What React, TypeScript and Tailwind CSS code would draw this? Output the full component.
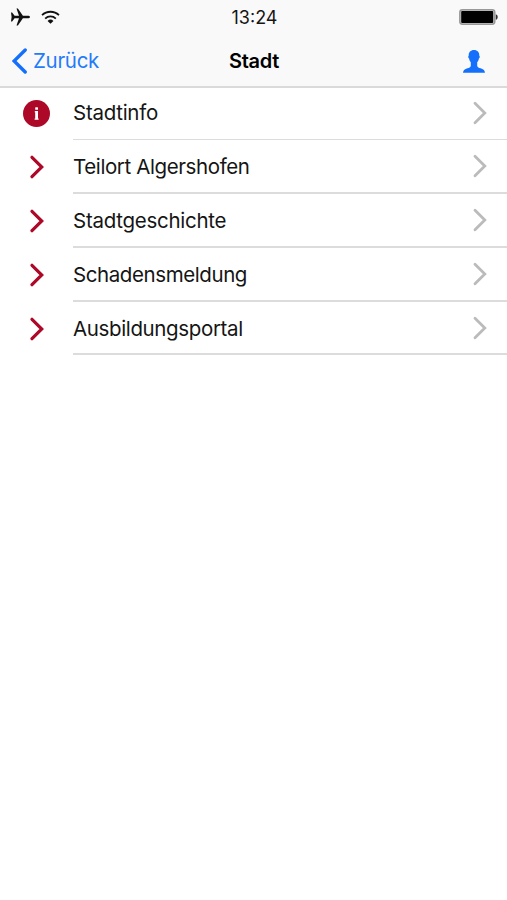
type Item = { label: string; info?: boolean; height: string; spacing: string };

const items: Item[] = [
  { label: "Stadtinfo", info: true, height: "h-[52px]", spacing: "tracking-[-0.27px]" },
  { label: "Teilort Algershofen", height: "h-[54px]", spacing: "tracking-[-0.39px]" },
  { label: "Stadtgeschichte", height: "h-[54px]", spacing: "tracking-[-0.27px]" },
  { label: "Schadensmeldung", height: "h-[54px]", spacing: "tracking-[-0.41px]" },
  { label: "Ausbildungsportal", height: "h-[53px]", spacing: "tracking-[-0.36px]" },
];

function Plane() {
  return (
    <svg width="19" height="18" viewBox="0 0 19 18" fill="#111">
      <path d="M0 4.500h1.100l2.500 3.300 4.400-.1L5.500.5h1.400l5 7.200h4.800c1.300 0 2.300.5 2.300 1.300s-1 1.300-2.300 1.300h-4.800l-5 7.200H5.500L8 10.300l-4.400-.1-2.500 3.300H0L.6 9z" />
    </svg>
  );
}

function Wifi() {
  return (
    <svg width="19" height="15" viewBox="0 0 20 15" fill="none" stroke="#111" strokeWidth="1.900">
      <path d="M1.100 5.100a12.700 12.700 0 0 1 17.800 0M4.400 8.700a8 8 0 0 1 11.200 0" />
      <path d="M10 14 6.900 11.100a4.500 4.500 0 0 1 6.200 0z" fill="#111" stroke="none" />
    </svg>
  );
}

function Battery() {
  return (
    <svg width="39" height="16" viewBox="0 0 39 16">
      <rect x=".8" y=".8" width="35" height="14.400" rx="2.600" fill="#ccc" stroke="#999" strokeWidth="1.500" />
      <rect x="2.200" y="2.100" width="32" height="11.800" rx="1" fill="#000" />
      <path d="M36.800 5.200c1.300.4 1.900 1.400 1.900 2.800s-.6 2.400-1.900 2.800z" fill="#333" />
    </svg>
  );
}

function Person() {
  return (
    <svg width="22" height="23" viewBox="0 0 22 23" fill="#146ffb">
      <path d="M11 0c3.400 0 5.500 2.300 5.300 5.700.7.3.6 2.300-.4 2.900-.3 1.700-.9 2.800-1.700 3.600v3.700c.3 1.300 1.700 1.800 3.400 2.300 2.600.8 4.100 1.700 4.400 4.500H0c.3-2.800 1.800-3.700 4.400-4.500 1.700-.5 3.100-1 3.400-2.300v-3.700C7 11.400 6.400 10.300 6.100 8.600c-1-.6-1.100-2.600-.4-2.900C5.500 2.300 7.600 0 11 0z" />
    </svg>
  );
}

function Chevron({ className }: { className: string }) {
  return (
    <svg className={className} width="14" height="24" viewBox="0 0 14 24" fill="none" stroke="currentColor" strokeLinecap="round">
      <path d="m2 2.300 9.800 9.700L2 21.700" />
    </svg>
  );
}

function Row({ item }: { item: Item }) {
  return (
    <li className={`flex ${item.height}`}>
      <div className="flex w-[73px] shrink-0 items-center justify-center">
        {item.info ? (
          <svg className="mb-px" width="27" height="27" viewBox="0 0 27 27">
            <circle cx="13.500" cy="13.500" r="13.500" fill="#ad0827" />
            <rect x="12.200" y="7.200" width="2.800" height="2.600" rx=".6" fill="#fff" />
            <path d="M11.800 11.100h3.200v7.300h.6v1.400h-4v-1.400h.6v-5.900h-.4z" fill="#fff" />
          </svg>
        ) : (
          <Chevron className="stroke-[3.2] text-[#ad0827]" />
        )}
      </div>
      <div
        className={`flex flex-1 items-center justify-between border-[#dcdcdc] pr-5 ${item.info ? "border-b border-[#cfcfcf] pb-px" : "border-b-2"}`}
      >
        <span className={`text-[20.5px] leading-6 whitespace-nowrap ${item.info ? "" : "pt-[2px]"} ${item.spacing}`}>
          {item.label}
        </span>
        <Chevron className="stroke-[2.8] text-[#bbb]" />
      </div>
    </li>
  );
}

export default function App() {
  return (
    <div className="flex min-h-[900px] w-full flex-col bg-white font-['Inter','Liberation_Sans',sans-serif] text-[#151515]">
      <header className="h-[88px] border-b-2 border-[#dadada] bg-[#f9f9f9]">
        <div className="grid h-9 grid-cols-[1fr_auto_1fr] items-center pr-[9px] pb-[2px] pl-[11px]">
          <div className="flex items-center gap-[11px]">
            <Plane />
            <Wifi />
          </div>
          <span className="pt-px text-center text-[18px] leading-5">13:24</span>
          <div className="flex justify-end">
            <Battery />
          </div>
        </div>
        <div className="grid h-[50px] grid-cols-[1fr_auto_1fr] items-center pr-[22px] pl-[23px]">
          <button className="-ml-[11px] flex items-center gap-[6px] text-[20.5px] leading-6 tracking-[-0.3px] text-[#247bfa]">
            <svg width="15" height="26" viewBox="0 0 15 26" fill="none" stroke="#146ffb" strokeWidth="3.400" strokeLinecap="round">
              <path d="M13.200 2 2.100 13l11.100 11" />
            </svg>
            Zurück
          </button>
          <h1 className="text-center text-[20px] leading-6 font-semibold tracking-[-0.3px] text-black">Stadt</h1>
          <div className="flex justify-end">
            <Person />
          </div>
        </div>
      </header>
      <ul>
        {items.map((item) => (
          <Row key={item.label} item={item} />
        ))}
      </ul>
    </div>
  );
}
